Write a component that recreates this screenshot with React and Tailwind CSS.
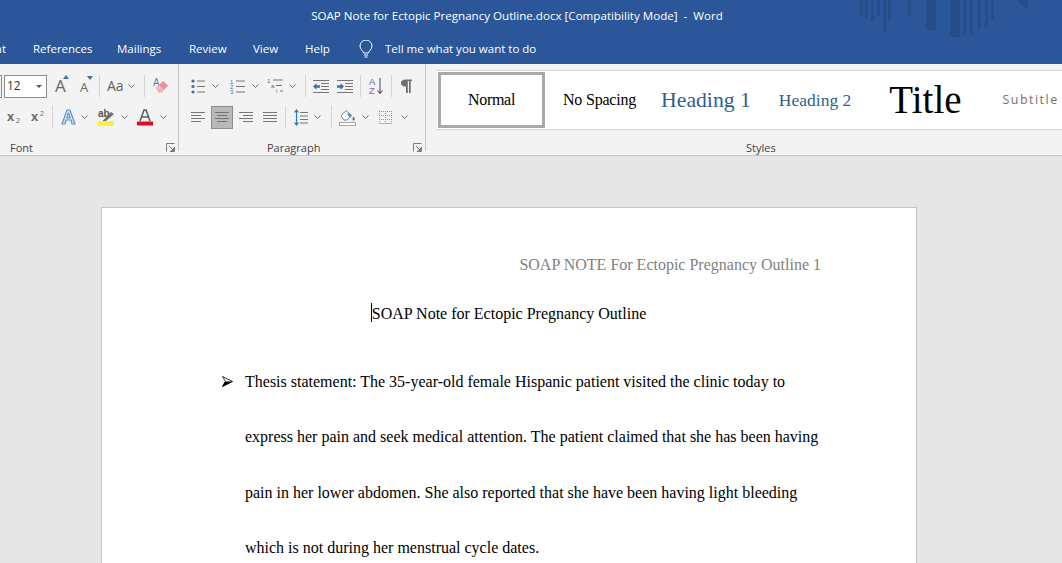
import React from 'react';

const Chev = ({ className = '' }) => (
  <svg width="7" height="4" viewBox="0 0 7 4" className={`shrink-0 ${className}`}>
    <path d="M.5.5l3 3 3-3" fill="none" stroke="#6a6a6a" strokeWidth="1" />
  </svg>
);

const Divider = ({ className = '' }) => <div className={`w-px h-[22px] bg-[#d4d4d4] shrink-0 ${className}`} />;

const Launcher = ({ className = '' }) => (
  <svg width="9" height="9" viewBox="0 0 9 9" className={`shrink-0 ${className}`}>
    <path d="M.5 8.500v-8h8M8.500 4v4.500H4M3 3l4.500 4.500M7.500 4.800v2.700H4.800" fill="none" stroke="#7a7a7a" strokeWidth="1" />
  </svg>
);

const Lines = ({ rows, w = 14, className = '' }) => (
  <svg width={w} height="13" viewBox={`0 0 ${w} 13`} className={`shrink-0 ${className}`}>
    {rows.map(([x1, x2], i) => (
      <path key={i} d={`M${x1} ${1.5 + i * 3}H${x2}`} stroke="#757575" strokeWidth="1" />
    ))}
  </svg>
);

const Bullets = ({ className }) => (
  <svg width="14" height="15" viewBox="0 0 14 15" className={`shrink-0 ${className}`}>
    {[2, 7.5, 13].map((y) => (
      <g key={y}>
        <circle cx="2" cy={y} r="1.6" fill="#41719c" />
        <path d={`M6 ${y}h8`} stroke="#757575" />
      </g>
    ))}
  </svg>
);

const Numbering = ({ className }) => (
  <svg width="15" height="15" viewBox="0 0 15 15" className={`shrink-0 ${className}`}>
    {[2, 7.5, 13].map((y) => <path key={y} d={`M6 ${y}h9`} stroke="#757575" />)}
    <text x="0" y="4.5" fontSize="6" fill="#41719c" fontFamily="Liberation Sans, sans-serif">1</text>
    <text x="0" y="10" fontSize="6" fill="#41719c" fontFamily="Liberation Sans, sans-serif">2</text>
    <text x="0" y="15" fontSize="6" fill="#41719c" fontFamily="Liberation Sans, sans-serif">3</text>
  </svg>
);

const Multi = ({ className }) => (
  <svg width="16" height="16" viewBox="0 0 16 16" className={`shrink-0 ${className}`}>
    <path d="M6 2h10M9 7.500h6M13 13h3" stroke="#757575" />
    <text x="0" y="5" fontSize="6" fill="#41719c" fontFamily="Liberation Sans, sans-serif">1</text>
    <text x="4" y="10" fontSize="6" fill="#41719c" fontFamily="Liberation Sans, sans-serif">a</text>
    <text x="9" y="15" fontSize="6" fill="#6b6b6b" fontFamily="Liberation Sans, sans-serif">i</text>
  </svg>
);

const Indent = ({ flip, className }) => (
  <svg width="16" height="13" viewBox="0 0 16 13" className={`shrink-0 ${className}`}>
    <path d="M0 .5h16M8 3.500h8M8 6.500h8M8 9.500h8M0 12.500h16" stroke="#757575" />
    {flip ? (
      <path d="M7 6.500L3.500 3.200v2H0v2.600h3.500v2z" fill="#2e75b6" />
    ) : (
      <path d="M0 6.500L3.500 3.200v2H7v2.600H3.500v2z" fill="#2e75b6" />
    )}
  </svg>
);

const Sort = ({ className }) => (
  <svg width="15" height="18" viewBox="0 0 15 18" className={`shrink-0 ${className}`}>
    <text x="0" y="8" fontSize="9.5" fill="#41719c" fontFamily="Liberation Sans, sans-serif">A</text>
    <text x="0" y="17" fontSize="9.5" fill="#8e5fa8" fontFamily="Liberation Sans, sans-serif">Z</text>
    <path d="M11 1v15M8.500 13.500L11 16.500l2.500-3" fill="none" stroke="#555" strokeWidth="1.1" />
  </svg>
);

const Pilcrow = ({ className }) => (
  <svg width="11" height="14" viewBox="0 0 11 14" className={`shrink-0 ${className}`}>
    <path d="M5 7.500C1.500 7.500 0 6 0 4s1.500-3.500 5-3.500h6v1.600H9.700V14H8V2.100H6.800V14H5z" fill="#6e6e6e" />
  </svg>
);

const GrowA = ({ small, className }) => (
  <div className={`relative shrink-0 text-[#666] font-['Open_Sans',sans-serif] leading-none ${small ? 'w-[12px] text-[13px] pt-[7px]' : 'w-[13px] text-[17px] pt-[3px]'} ${className}`}>
    A
    <svg width="6" height="4" viewBox="0 0 6 4" className={`absolute ${small ? '-right-[1px] top-[2px]' : '-right-[1px] top-[1px]'}`}>
      <path d={small ? 'M0 0h6L3 4z' : 'M0 4h6L3 0z'} fill="#41719c" />
    </svg>
  </div>
);

const Eraser = ({ className }) => (
  <svg width="16" height="18" viewBox="0 0 16 18" className={`shrink-0 ${className}`}>
    <text x="0" y="9" fontSize="10" fill="#5b7fa8" fontFamily="Liberation Sans, sans-serif">A</text>
    <path d="M3 11l7-7 5 4.500-7 7.500H6z" fill="#e8909c" />
    <path d="M3 11l3-3 5 5-3 3H6z" fill="#f1b8c0" />
  </svg>
);

const Script = ({ sup, className }) => (
  <div className={`relative shrink-0 w-[13px] h-[14px] font-['Liberation_Sans',sans-serif] font-bold text-[#666] text-[13px] leading-[14px] ${className}`}>
    x
    <span className={`absolute right-0 text-[7px] leading-none font-normal ${sup ? 'top-0' : 'bottom-0'}`}>2</span>
  </div>
);

const TextEffect = ({ className }) => (
  <svg width="15" height="16" viewBox="0 0 15 16" className={`shrink-0 ${className}`}>
    <path d="M1 15L6 1h3l5 14h-3L10 11H5l-1 4zM5.800 8.800h3.400L7.500 4z" fill="#cfe2f3" stroke="#5b8fc4" strokeWidth="1.1" strokeLinejoin="round" />
  </svg>
);

const Highlight = ({ className }) => (
  <svg width="16" height="18" viewBox="0 0 16 18" className={`shrink-0 ${className}`}>
    <text x="0" y="9" fontSize="10" fontWeight="bold" fill="#555" fontFamily="Liberation Sans, sans-serif">ab</text>
    <path d="M5 12.500L13 4l3 2-8 7H5z" fill="#6e6e6e" />
    <rect y="13" width="16" height="5" fill="#ffef3a" />
  </svg>
);

const FontColor = ({ className }) => (
  <svg width="16" height="18" viewBox="0 0 16 18" className={`shrink-0 ${className}`}>
    <path d="M3 13L7 2h2l4 11M5 9h6" fill="none" stroke="#5a5a5a" strokeWidth="1.5" />
    <rect y="13.500" width="16" height="4" fill="#e00b1c" />
  </svg>
);

const LineSpacing = ({ className }) => (
  <svg width="14" height="17" viewBox="0 0 14 17" className={`shrink-0 ${className}`}>
    <path d="M6 3.500h8M6 7h8M6 10.500h8M6 14h8" stroke="#757575" />
    <path d="M2.500 1v15M.5 3.500l2-2.500 2 2.500M.5 13.500l2 2.500 2-2.500" fill="none" stroke="#2e75b6" strokeWidth="1.2" />
  </svg>
);

const Shading = ({ className }) => (
  <svg width="17" height="17" viewBox="0 0 17 17" className={`shrink-0 ${className}`}>
    <path d="M2 7L7 1.500l5.500 5L8 11H5z" fill="#fff" stroke="#808080" />
    <path d="M9 3l4 3.500-2 2.500-2.500-3z" fill="#6f93b3" />
    <path d="M14.500 7.500c.8 1.300 1.300 2 1.300 2.700a1.200 1.200 0 01-2.400 0c0-.7.500-1.400 1.100-2.700z" fill="#41719c" />
    <rect x=".5" y="13.500" width="16" height="3" fill="#fbfbfb" stroke="#a8a8a8" />
  </svg>
);

const Borders = ({ className }) => (
  <svg width="13" height="13" viewBox="0 0 13 13" className={`shrink-0 ${className}`}>
    <path d="M0 .5h13M0 4.500h13M0 8.500h13M.5 0v13M6.500 0v13M12.500 0v13" fill="none" stroke="#8f8f8f" strokeDasharray="1 1" />
    <path d="M0 12.500h13" stroke="#b0b0b0" />
  </svg>
);

const labelCls = "text-[11px] leading-none text-[#444] font-['Open_Sans',sans-serif]";

const FontGroup = () => (
  <div className="w-[179px] shrink-0 border-r border-[#c6c6c6] flex flex-col mb-[4px]">
    <div className="flex items-center h-[24px] mt-[10px]">
      <div className="w-[2px] h-[23px] border-y border-r border-[#8d8d8d] shrink-0" />
      <div className="ml-[2px] w-[43px] h-[23px] border border-[#8d8d8d] bg-white flex items-center justify-between pl-[2px] pr-[4px] shrink-0">
        <span className="text-[12px] text-[#333] font-['Open_Sans',sans-serif]">12</span>
        <svg width="6" height="3" viewBox="0 0 6 3"><path d="M0 0h6L3 3z" fill="#555" /></svg>
      </div>
      <GrowA className="ml-[8px] h-[24px]" />
      <GrowA small className="ml-[12px] h-[24px]" />
      <Divider className="ml-[7px]" />
      <span className="ml-[7px] w-[16px] text-[14px] leading-none text-[#5f5f5f] font-['Open_Sans',sans-serif] shrink-0">Aa</span>
      <Chev className="ml-[5px]" />
      <Divider className="ml-[9px]" />
      <Eraser className="ml-[8px]" />
    </div>
    <div className="flex items-center h-[26px] mt-[6px]">
      <Script className="ml-[7px]" />
      <Script sup className="ml-[11px]" />
      <Divider className="ml-[8px]" />
      <TextEffect className="ml-[8px]" />
      <Chev className="ml-[5px]" />
      <Highlight className="ml-[10px]" />
      <Chev className="ml-[7px]" />
      <FontColor className="ml-[9px]" />
      <Chev className="ml-[7px]" />
    </div>
    <div className="flex items-center mt-auto mb-[-2px]">
      <span className={`${labelCls} ml-[10px]`}>Font</span>
      <Launcher className="ml-auto mr-[3px]" />
    </div>
  </div>
);

const ParagraphGroup = () => (
  <div className="w-[247px] shrink-0 border-r border-[#c6c6c6] flex flex-col mb-[4px]">
    <div className="flex items-center h-[24px] mt-[10px]">
      <Bullets className="ml-[12px]" />
      <Chev className="ml-[7px]" />
      <Numbering className="ml-[11px]" />
      <Chev className="ml-[7px]" />
      <Multi className="ml-[8px]" />
      <Chev className="ml-[6px]" />
      <Divider className="ml-[9px]" />
      <Indent className="ml-[7px]" />
      <Indent flip className="ml-[8px]" />
      <Divider className="ml-[7px]" />
      <Sort className="ml-[8px]" />
      <Divider className="ml-[7px]" />
      <Pilcrow className="ml-[9px]" />
    </div>
    <div className="flex items-center h-[26px] mt-[6px]">
      <Lines className="ml-[12px]" rows={[[0, 14], [0, 10], [0, 14], [0, 10], [0, 14]]} />
      <div className="ml-[6px] w-[22px] h-[23px] bg-[#b9b9b9] border border-[#8d8d8d] flex items-center justify-center shrink-0">
        <Lines rows={[[0, 14], [2, 12], [0, 14], [2, 12], [0, 14]]} />
      </div>
      <Lines className="ml-[6px]" rows={[[0, 14], [4, 14], [0, 14], [4, 14], [0, 14]]} />
      <Lines className="ml-[10px]" rows={[[0, 14], [0, 14], [0, 14], [0, 14], [0, 14]]} />
      <Divider className="ml-[8px]" />
      <LineSpacing className="ml-[8px]" />
      <Chev className="ml-[6px]" />
      <Divider className="ml-[10px]" />
      <Shading className="ml-[7px]" />
      <Chev className="ml-[6px]" />
      <Borders className="ml-[10px]" />
      <Chev className="ml-[9px]" />
    </div>
    <div className="flex items-center mt-auto mb-[-2px]">
      <span className={`${labelCls} ml-[88px]`}>Paragraph</span>
      <Launcher className="ml-auto mr-[3px]" />
    </div>
  </div>
);

const StyleItem = ({ className, children }) => <div className={`shrink-0 whitespace-nowrap ${className}`}>{children}</div>;

const StylesGroup = () => (
  <div className="flex-1 min-w-0 flex flex-col">
    <div className="ml-[11px] mt-[6px] h-[60px] bg-white border-y border-[#d4d4d4] flex items-center overflow-hidden">
      <StyleItem className="ml-[1px] w-[107px] h-[56px] border-[3px] border-[#a9a9a9] flex items-center justify-center text-[16px] text-black font-['Liberation_Serif',serif] tracking-[-0.3px]">Normal</StyleItem>
      <StyleItem className="ml-[18px] text-[16px] text-black font-['Liberation_Serif',serif] tracking-[-0.2px]">No Spacing</StyleItem>
      <StyleItem className="ml-[25px] text-[21.700px] text-[#2e5f91] font-['Liberation_Serif',serif]">Heading 1</StyleItem>
      <StyleItem className="ml-[28px] text-[17.500px] text-[#2e5f91] font-['Liberation_Serif',serif]">Heading 2</StyleItem>
      <StyleItem className="ml-[38px] pt-[1px] text-[39px] text-black font-['Liberation_Serif',serif]">Title</StyleItem>
      <StyleItem className="ml-[41px] pt-[1px] text-[12.400px] tracking-[1.500px] text-[#707070] font-['Open_Sans',sans-serif]">Subtitle</StyleItem>
    </div>
    <div className={`${labelCls} mt-[12px] ml-[320px]`}>Styles</div>
  </div>
);

export default function App() {
  return (
    <div className="relative w-[1062px] h-[563px] overflow-hidden bg-[#e6e6e6] flex flex-col">
      <div className="relative h-[64px] shrink-0 bg-[#2b579a] text-white font-['Open_Sans',sans-serif] overflow-hidden">
        <svg width="170" height="40" viewBox="0 0 170 40" className="absolute left-[858px] top-0">
          <g fill="#24497f" opacity="0.7">
            <rect x="2" width="3" height="15" />
            <rect x="7" width="3" height="18" />
            <rect x="13" width="3" height="22" />
            <rect x="19" width="3" height="16" />
            <rect x="25" width="3" height="32" />
            <rect x="30" width="3" height="20" />
            <rect x="50" width="3" height="15" />
            <rect x="68" width="10" height="30" />
            <rect x="92" width="10" height="37" />
            <rect x="105" width="3" height="35" />
            <rect x="112" width="3" height="34" />
            <rect x="120" width="3" height="30" />
            <rect x="127" width="3" height="26" />
            <rect x="133" width="3" height="20" />
            <circle cx="172" cy="-6" r="14" />
          </g>
        </svg>
        <div className="relative h-[32px] flex items-center justify-center text-[11.600px] pr-[28px]">
          <span className="whitespace-pre">SOAP Note for Ectopic Pregnancy Outline.docx [Compatibility Mode]  -  Word</span>
        </div>
        <div className="relative h-[32px] pt-[1px] flex items-center text-[11.500px] whitespace-nowrap">
          <span className="w-[6px] overflow-hidden flex justify-end shrink-0"><span>nt</span></span>
          <span className="ml-[27px] w-[84px] shrink-0">References</span>
          <span className="w-[72px] shrink-0">Mailings</span>
          <span className="w-[64px] shrink-0">Review</span>
          <span className="w-[52px] shrink-0">View</span>
          <span className="w-[54px] shrink-0">Help</span>
          <svg width="14" height="18" viewBox="0 0 14 18" className="shrink-0">
            <path d="M4.500 13c0-2-3.500-3.500-3.500-7a6 6 0 0112 0c0 3.500-3.500 5-3.500 7zM5 15h4M5.500 17h3" fill="none" stroke="#fff" strokeWidth="1" />
          </svg>
          <span className="ml-[12px]">Tell me what you want to do</span>
        </div>
      </div>

      <div className="h-[92px] shrink-0 bg-[#f3f3f3] border-b border-[#c6c6c6] flex">
        <FontGroup />
        <ParagraphGroup />
        <StylesGroup />
      </div>

      <div className="ml-[101px] mt-[51px] w-[816px] flex-1 bg-white border border-[#c6c6c6] border-b-0 font-['Liberation_Serif',serif] text-[16px] text-black">
        <div className="mt-[47px] pr-[95px] text-right text-[#7f7f7f] leading-[20px]">SOAP NOTE For Ectopic Pregnancy Outline 1</div>
        <div className="mt-[29px] relative leading-[20px] flex justify-center">
          <span className="relative">
            <span className="absolute -left-[1px] -top-[1px] w-px h-[19px] bg-black" />
            SOAP Note for Ectopic Pregnancy Outline
          </span>
        </div>
        <div className="mt-[30px] flex pl-[120px]">
          <svg width="11" height="11" viewBox="0 0 11 11" className="mt-[22px] shrink-0">
            <path d="M.5.500l10 5-10 5 3-5z" fill="none" stroke="#000" strokeWidth="0.8" />
            <path d="M0 11l11-5.500H3z" fill="#000" />
          </svg>
          <div className="ml-[12px] leading-[55.400px] whitespace-nowrap">
            <div>Thesis statement: The 35-year-old female Hispanic patient visited the clinic today to</div>
            <div>express her pain and seek medical attention. The patient claimed that she has been having</div>
            <div>pain in her lower abdomen. She also reported that she have been having light bleeding</div>
            <div>which is not during her menstrual cycle dates.</div>
          </div>
        </div>
      </div>
    </div>
  );
}
